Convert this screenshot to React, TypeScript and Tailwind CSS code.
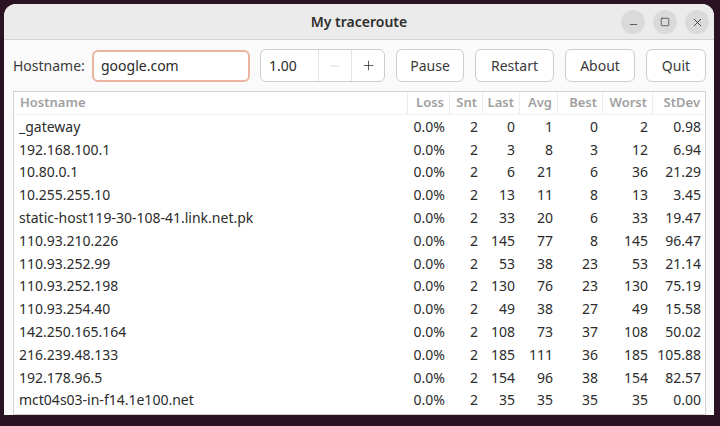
import { Minus, Plus, X, Square } from 'lucide-react';

const rows: [string, string, number, number, number, number, number, string][] = [
  ['_gateway', '0.0%', 2, 0, 1, 0, 2, '0.98'],
  ['192.168.100.1', '0.0%', 2, 3, 8, 3, 12, '6.94'],
  ['10.80.0.1', '0.0%', 2, 6, 21, 6, 36, '21.29'],
  ['10.255.255.10', '0.0%', 2, 13, 11, 8, 13, '3.45'],
  ['static-host119-30-108-41.link.net.pk', '0.0%', 2, 33, 20, 6, 33, '19.47'],
  ['110.93.210.226', '0.0%', 2, 145, 77, 8, 145, '96.47'],
  ['110.93.252.99', '0.0%', 2, 53, 38, 23, 53, '21.14'],
  ['110.93.252.198', '0.0%', 2, 130, 76, 23, 130, '75.19'],
  ['110.93.254.40', '0.0%', 2, 49, 38, 27, 49, '15.58'],
  ['142.250.165.164', '0.0%', 2, 108, 73, 37, 108, '50.02'],
  ['216.239.48.133', '0.0%', 2, 185, 111, 36, 185, '105.88'],
  ['192.178.96.5', '0.0%', 2, 154, 96, 38, 154, '82.57'],
  ['mct04s03-in-f14.1e100.net', '0.0%', 2, 35, 35, 35, 35, '0.00'],
];

const cols = [
  { name: 'Loss', w: 'w-[42px]' },
  { name: 'Snt', w: 'w-[33px]' },
  { name: 'Last', w: 'w-[37px]' },
  { name: 'Avg', w: 'w-[38px]' },
  { name: 'Best', w: 'w-[45px]' },
  { name: 'Worst', w: 'w-[50px]' },
  { name: 'StDev', w: 'w-[53px]' },
];

function Button({ label, w }: { label: string; w: string }) {
  return (
    <button
      className={`${w} h-[33px] rounded-[6px] border border-[#cdcdcd] bg-white text-[14px] text-[#3a3a3a] shrink-0`}
    >
      {label}
    </button>
  );
}

function WinButton({ children }: { children: React.ReactNode }) {
  return (
    <div className="w-[24px] h-[24px] rounded-full bg-[#dadada] flex items-center justify-center text-[#2e2e2e]">
      {children}
    </div>
  );
}

export default function App() {
  return (
    <div
      className="w-[720px] h-[426px] bg-[#2a1222] pt-[4px] pl-[4px] overflow-hidden"
      style={{ fontFamily: '"Noto Sans", "Open Sans", sans-serif' }}
    >
      <div className="w-[710px] h-[411px] rounded-t-[12px] bg-[#fafafa] flex flex-col overflow-hidden">
        <div className="h-[36px] shrink-0 bg-[#ebebeb] border-b border-[#d3d3d3] relative flex items-center justify-center">
          <span className="text-[14px] font-semibold text-[#2e2e2e]">My traceroute</span>
          <div className="absolute right-[5px] top-[6px] flex gap-[8px]">
            <WinButton>
              <Minus size={11} strokeWidth={1.6} className="mt-[5px]" />
            </WinButton>
            <WinButton>
              <Square size={10} strokeWidth={1.6} />
            </WinButton>
            <WinButton>
              <X size={13} strokeWidth={1.6} />
            </WinButton>
          </div>
        </div>

        <div className="flex items-center h-[33px] mt-[9px] pl-[9px] text-[14px]">
          <span className="text-[#3a3a3a] w-[79px] shrink-0">Hostname:</span>
          <div className="w-[158px] h-[32px] rounded-[6px] border-2 border-[#eab4a0] bg-white flex items-center pl-[7px] text-[#2a2a2a] shrink-0">
            google.com
          </div>
          <div className="ml-[10px] w-[125px] h-[33px] rounded-[6px] border border-[#cdcdcd] bg-white flex items-center shrink-0">
            <span className="w-[57px] pl-[8px] text-[#2a2a2a]">1.00</span>
            <div className="w-[33px] h-full border-l border-[#e2e2e2] flex items-center justify-center text-[#cfcfcf]">
              <Minus size={14} strokeWidth={1.3} />
            </div>
            <div className="w-[33px] h-full border-l border-[#e2e2e2] flex items-center justify-center text-[#3a3a3a]">
              <Plus size={15} strokeWidth={1.3} />
            </div>
          </div>
          <div className="ml-[11px] flex gap-[11px]">
            <Button label="Pause" w="w-[68px]" />
            <Button label="Restart" w="w-[79px]" />
            <Button label="About" w="w-[70px]" />
            <Button label="Quit" w="w-[60px]" />
          </div>
        </div>

        <div className="ml-[9px] mt-[9px] w-[693px] flex-1 border border-[#d2d2d2] bg-white overflow-hidden">
          <div className="h-[23px] flex items-center text-[13px] font-semibold text-[#a0a0a0] border-b border-[#f0f0f0]">
            <div className="flex-1 pl-[6px]">Hostname</div>
            {cols.map((c) => (
              <div
                key={c.name}
                className={`${c.w} h-full flex items-center justify-end pr-[5px] border-l border-[#ececec]`}
              >
                {c.name}
              </div>
            ))}
          </div>
          {rows.map((r) => (
            <div key={r[0]} className="h-[22.8px] flex items-center text-[14px] text-[#2c2c2c]">
              <div className="flex-1 pl-[5px] whitespace-nowrap">{r[0]}</div>
              {r.slice(1).map((v, i) => (
                <div key={i} className={`${cols[i].w} text-right pr-[4px]`}>
                  {v}
                </div>
              ))}
            </div>
          ))}
        </div>
      </div>
    </div>
  );
}
